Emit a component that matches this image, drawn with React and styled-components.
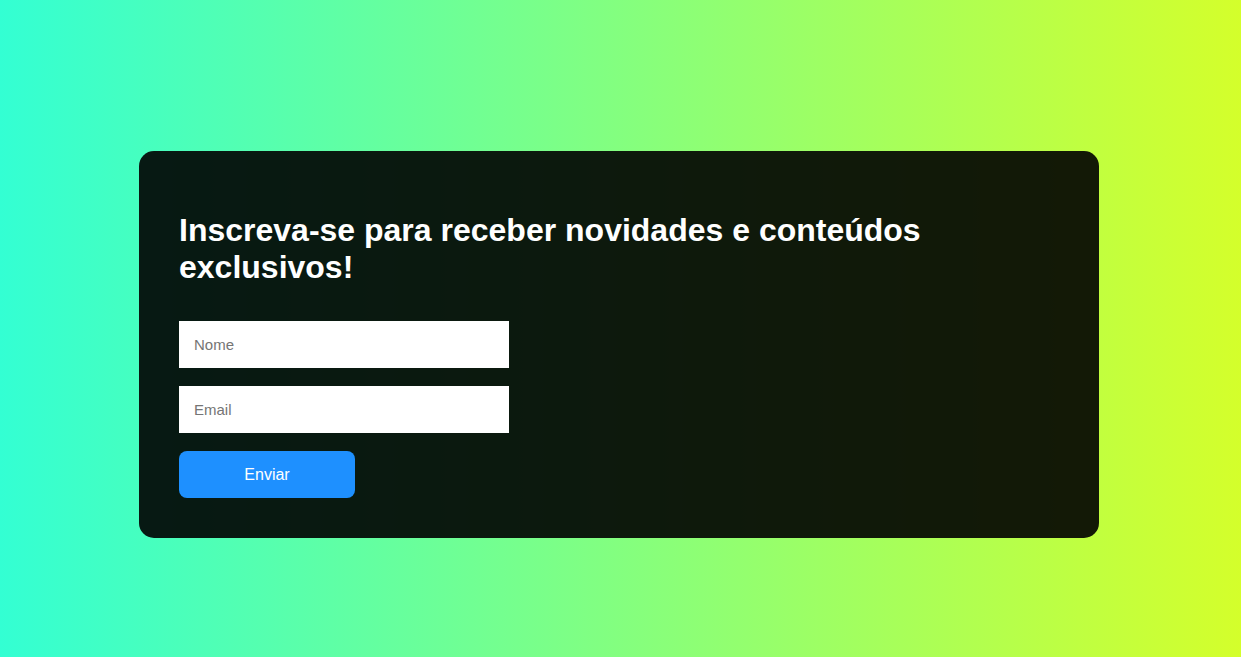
import React from "react";
import styled, { createGlobalStyle } from "styled-components";

const GlobalStyle = createGlobalStyle`
  * {
    box-sizing: border-box;
  }
  body {
    margin: 0;
    font-family: "Liberation Sans", Arial, sans-serif;
  }
`;

const Page = styled.div`
  min-height: 100vh;
  display: flex;
  align-items: flex-start;
  padding: 151px 0 0 139px;
  background: linear-gradient(90deg, #33ffd3, #d4ff2b);
`;

const Card = styled.div`
  width: 960px;
  padding: 40px;
  border-radius: 15px;
  background: rgba(0, 0, 0, 0.9);
`;

const Title = styled.h1`
  margin: 21px 0 35px;
  color: #ffffff;
  font-size: 32px;
  font-weight: bold;
  line-height: 37px;
`;

const Form = styled.form`
  display: flex;
  flex-direction: column;
  align-items: flex-start;
  gap: 18px;
`;

const Input = styled.input`
  width: 330px;
  height: 47px;
  padding: 0 15px;
  border: none;
  outline: none;
  background: #ffffff;
  font-family: inherit;
  font-size: 15px;
  color: #222;

  &::placeholder {
    color: #757575;
  }
`;

const Button = styled.button`
  width: 176px;
  height: 47px;
  border: none;
  border-radius: 8px;
  background: #1e90ff;
  color: #ffffff;
  font-family: inherit;
  font-size: 16px;
  cursor: pointer;
`;

export default function App() {
  return (
    <>
      <GlobalStyle />
      <Page>
        <Card>
          <Title>Inscreva-se para receber novidades e conteúdos exclusivos!</Title>
          <Form onSubmit={(e) => e.preventDefault()}>
            <Input type="text" placeholder="Nome" />
            <Input type="email" placeholder="Email" />
            <Button type="submit">Enviar</Button>
          </Form>
        </Card>
      </Page>
    </>
  );
}
